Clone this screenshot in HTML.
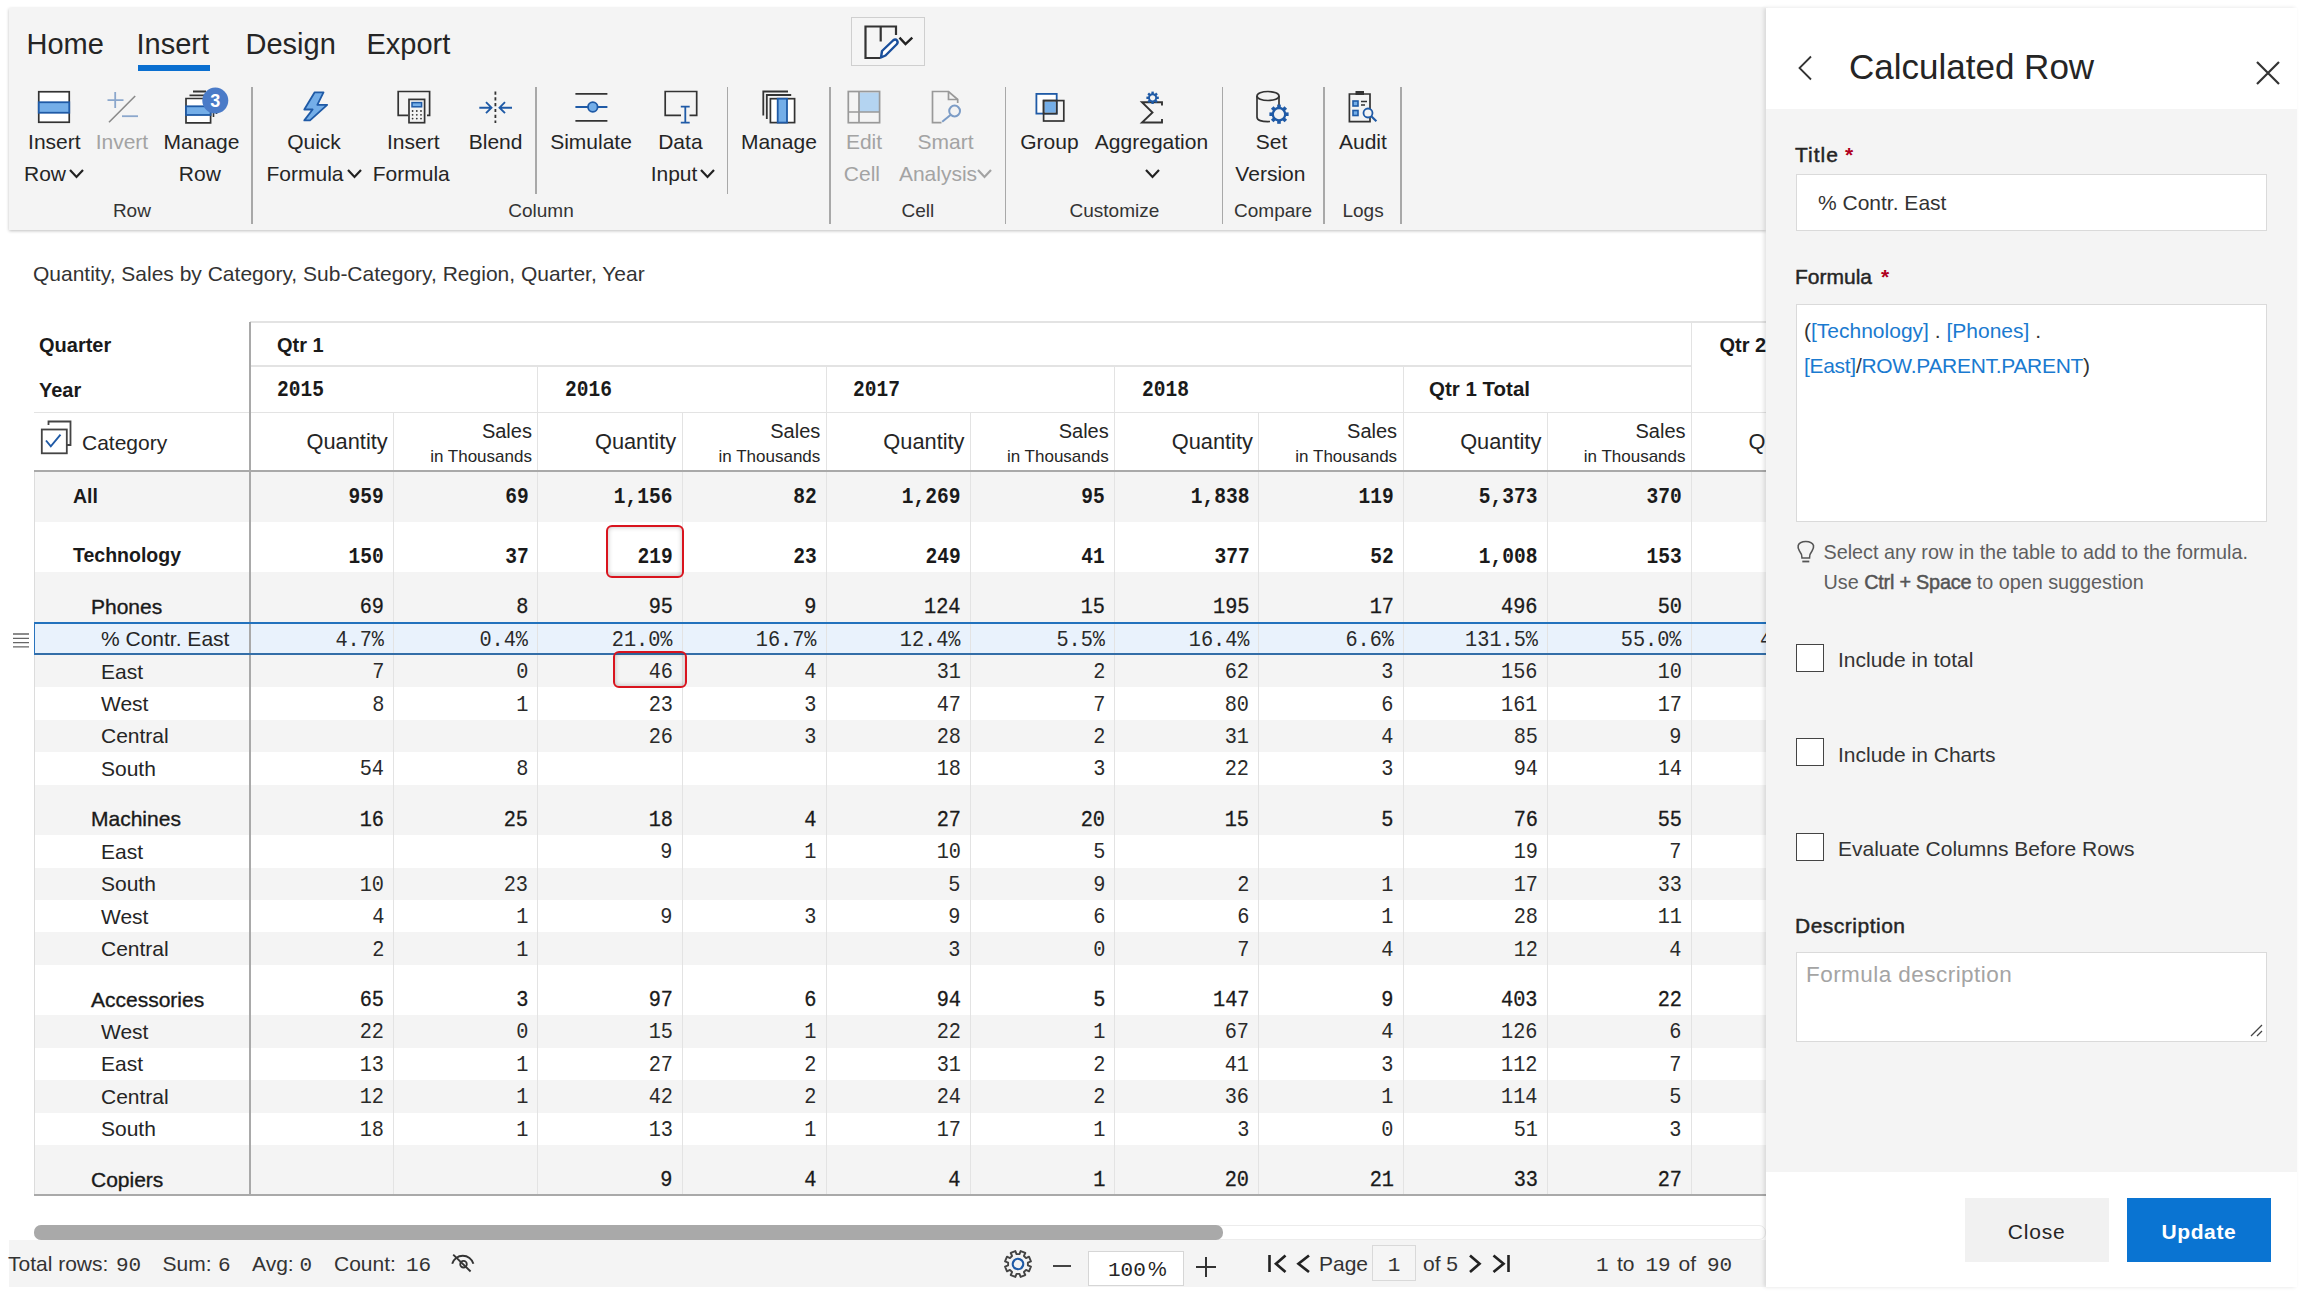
<!DOCTYPE html><html><head><meta charset="utf-8"><style>
html,body{margin:0;padding:0;background:#fff;}
body{width:2304px;height:1295px;position:relative;overflow:hidden;font-family:"Liberation Sans",sans-serif;}
.t{position:absolute;white-space:pre;}
.r{position:absolute;}
.sb{-webkit-text-stroke:0.45px currentColor;}
</style></head><body>
<div class="r" style="left:9.00px;top:8.00px;width:1757.00px;height:222.00px;background:#f4f4f4;box-shadow:0 1px 3px rgba(0,0,0,0.25);"></div>
<div class="t" style="top:29.65px;font-size:29px;line-height:29px;color:#252525;left:26.50px;">Home</div>
<div class="t" style="top:29.65px;font-size:29px;line-height:29px;color:#252525;left:136.50px;">Insert</div>
<div class="t" style="top:29.65px;font-size:29px;line-height:29px;color:#252525;left:245.50px;">Design</div>
<div class="t" style="top:29.65px;font-size:29px;line-height:29px;color:#252525;left:366.50px;">Export</div>
<div class="r" style="left:137.50px;top:65.00px;width:72.50px;height:5.50px;background:#0a6fd0;"></div>
<div class="r" style="left:850.50px;top:17.30px;width:74.30px;height:48.90px;background:#f5f5f5;box-sizing:border-box;border:1.5px solid #cfcfcf;"></div>
<svg class="r" style="left:860px;top:22px;" width="60" height="40" viewBox="0 0 60 40" fill="none"><path d="M20.5 36 H5.5 V4.5 H36 V13" stroke="#333" stroke-width="2.2"/><path d="M20.7 4.5 V19.5" stroke="#333" stroke-width="2.2"/><path d="M21 35.5 L22 29 L33 18.5 Q35.5 16.5 37 18.5 Q38.5 20.5 36.5 22.5 L25.5 33.5 Z" stroke="#1a4f9c" stroke-width="2.4" fill="#fff" stroke-linejoin="round"/><path d="M39.5 15.6 L45.5 22 L52.3 15.6" stroke="#222" stroke-width="2.4"/></svg>
<div class="r" style="left:251.25px;top:87.00px;width:1.50px;height:137.00px;background:#a8a8a8;"></div>
<div class="r" style="left:535.25px;top:87.00px;width:1.50px;height:107.00px;background:#a8a8a8;"></div>
<div class="r" style="left:726.75px;top:87.00px;width:1.50px;height:107.00px;background:#a8a8a8;"></div>
<div class="r" style="left:829.25px;top:87.00px;width:1.50px;height:137.00px;background:#a8a8a8;"></div>
<div class="r" style="left:1004.75px;top:87.00px;width:1.50px;height:137.00px;background:#a8a8a8;"></div>
<div class="r" style="left:1221.75px;top:87.00px;width:1.50px;height:137.00px;background:#a8a8a8;"></div>
<div class="r" style="left:1323.25px;top:87.00px;width:1.50px;height:137.00px;background:#a8a8a8;"></div>
<div class="r" style="left:1400.25px;top:87.00px;width:1.50px;height:137.00px;background:#a8a8a8;"></div>
<div class="t" style="top:130.82px;font-size:21px;line-height:21px;color:#252525;left:-245.70px;width:600px;text-align:center;">Insert</div>
<div class="t" style="top:162.92px;font-size:21px;line-height:21px;color:#252525;left:-255.00px;width:600px;text-align:center;">Row</div>
<svg class="r" style="left:68px;top:168px;" width="17" height="11" viewBox="0 0 17 11" fill="none"><path d="M2 2 L8.5 9 L15 2" stroke="#222" stroke-width="2.2"/></svg>
<div class="t" style="top:130.82px;font-size:21px;line-height:21px;color:#a3a3a3;left:-178.10px;width:600px;text-align:center;">Invert</div>
<div class="t" style="top:130.82px;font-size:21px;line-height:21px;color:#252525;left:-98.50px;width:600px;text-align:center;">Manage</div>
<div class="t" style="top:162.92px;font-size:21px;line-height:21px;color:#252525;left:-100.20px;width:600px;text-align:center;">Row</div>
<div class="t" style="top:201.12px;font-size:19px;line-height:19px;color:#333;left:-168.10px;width:600px;text-align:center;">Row</div>
<div class="t" style="top:130.82px;font-size:21px;line-height:21px;color:#252525;left:14.00px;width:600px;text-align:center;">Quick</div>
<div class="t" style="top:162.92px;font-size:21px;line-height:21px;color:#252525;left:5.00px;width:600px;text-align:center;">Formula</div>
<svg class="r" style="left:346px;top:168px;" width="17" height="11" viewBox="0 0 17 11" fill="none"><path d="M2 2 L8.5 9 L15 2" stroke="#222" stroke-width="2.2"/></svg>
<div class="t" style="top:130.82px;font-size:21px;line-height:21px;color:#252525;left:113.30px;width:600px;text-align:center;">Insert</div>
<div class="t" style="top:162.92px;font-size:21px;line-height:21px;color:#252525;left:111.30px;width:600px;text-align:center;">Formula</div>
<div class="t" style="top:130.82px;font-size:21px;line-height:21px;color:#252525;left:195.60px;width:600px;text-align:center;">Blend</div>
<div class="t" style="top:130.82px;font-size:21px;line-height:21px;color:#252525;left:291.00px;width:600px;text-align:center;">Simulate</div>
<div class="t" style="top:130.82px;font-size:21px;line-height:21px;color:#252525;left:380.40px;width:600px;text-align:center;">Data</div>
<div class="t" style="top:162.92px;font-size:21px;line-height:21px;color:#252525;left:374.00px;width:600px;text-align:center;">Input</div>
<svg class="r" style="left:699px;top:168px;" width="17" height="11" viewBox="0 0 17 11" fill="none"><path d="M2 2 L8.5 9 L15 2" stroke="#222" stroke-width="2.2"/></svg>
<div class="t" style="top:201.12px;font-size:19px;line-height:19px;color:#333;left:241.00px;width:600px;text-align:center;">Column</div>
<div class="t" style="top:130.82px;font-size:21px;line-height:21px;color:#252525;left:478.90px;width:600px;text-align:center;">Manage</div>
<div class="t" style="top:130.82px;font-size:21px;line-height:21px;color:#a3a3a3;left:564.00px;width:600px;text-align:center;">Edit</div>
<div class="t" style="top:162.92px;font-size:21px;line-height:21px;color:#a3a3a3;left:561.90px;width:600px;text-align:center;">Cell</div>
<div class="t" style="top:130.82px;font-size:21px;line-height:21px;color:#a3a3a3;left:645.50px;width:600px;text-align:center;">Smart</div>
<div class="t" style="top:162.92px;font-size:21px;line-height:21px;color:#a3a3a3;left:638.00px;width:600px;text-align:center;">Analysis</div>
<svg class="r" style="left:976px;top:168px;" width="17" height="11" viewBox="0 0 17 11" fill="none"><path d="M2 2 L8.5 9 L15 2" stroke="#a3a3a3" stroke-width="2.2"/></svg>
<div class="t" style="top:201.12px;font-size:19px;line-height:19px;color:#333;left:617.90px;width:600px;text-align:center;">Cell</div>
<div class="t" style="top:130.82px;font-size:21px;line-height:21px;color:#252525;left:749.40px;width:600px;text-align:center;">Group</div>
<div class="t" style="top:130.82px;font-size:21px;line-height:21px;color:#252525;left:851.50px;width:600px;text-align:center;">Aggregation</div>
<svg class="r" style="left:1144px;top:168px;" width="17" height="11" viewBox="0 0 17 11" fill="none"><path d="M2 2 L8.5 9 L15 2" stroke="#222" stroke-width="2.2"/></svg>
<div class="t" style="top:201.12px;font-size:19px;line-height:19px;color:#333;left:814.40px;width:600px;text-align:center;">Customize</div>
<div class="t" style="top:130.82px;font-size:21px;line-height:21px;color:#252525;left:971.60px;width:600px;text-align:center;">Set</div>
<div class="t" style="top:162.92px;font-size:21px;line-height:21px;color:#252525;left:970.40px;width:600px;text-align:center;">Version</div>
<div class="t" style="top:201.12px;font-size:19px;line-height:19px;color:#333;left:973.10px;width:600px;text-align:center;">Compare</div>
<div class="t" style="top:130.82px;font-size:21px;line-height:21px;color:#252525;left:1062.90px;width:600px;text-align:center;">Audit</div>
<div class="t" style="top:201.12px;font-size:19px;line-height:19px;color:#333;left:1063.10px;width:600px;text-align:center;">Logs</div>
<svg class="r" style="left:36px;top:89px;" width="36" height="36" viewBox="0 0 36 36" fill="none"><rect x="2.75" y="2.75" width="30.5" height="30.5" stroke="#333" stroke-width="1.7" fill="#fff"/><rect x="2.75" y="13.25" width="30.5" height="10.5" stroke="#1f5aa6" stroke-width="1.8" fill="#74aee8"/></svg>
<svg class="r" style="left:104px;top:88px;" width="40" height="38" viewBox="0 0 40 38" fill="none"><path d="M3.5 12.2 H19.5 M11.2 4 V20" stroke="#8ba7cc" stroke-width="1.8"/><path d="M18 28.2 H34" stroke="#8ba7cc" stroke-width="1.8"/><path d="M5 34.3 L31.2 8" stroke="#8a8a8a" stroke-width="1.6"/></svg>
<svg class="r" style="left:182px;top:86px;" width="50" height="40" viewBox="0 0 50 40" fill="none"><path d="M11 5.5 H24 M7.5 9.4 H26" stroke="#333" stroke-width="1.8"/><path d="M4 12.5 H28.6 V36.8 H4 Z" stroke="#333" stroke-width="1.7" fill="#fff"/><rect x="4" y="20.3" width="24.6" height="8.7" stroke="#1f5aa6" stroke-width="1.8" fill="#74aee8"/><path d="M31.5 31 V24 M34.5 28 V24" stroke="#333" stroke-width="1.6"/><circle cx="33.3" cy="14.6" r="13" fill="#4a7bc8"/><text x="33.3" y="21" text-anchor="middle" font-family="Liberation Sans" font-weight="700" font-size="18" fill="#fff">3</text></svg>
<svg class="r" style="left:300px;top:88px;" width="32" height="36" viewBox="0 0 32 36" fill="none"><path d="M14.7 4.3 H23.5 L17.3 16.8 H27.2 L10 32.4 H4.3 L12.6 21.5 H4.3 Z" stroke="#1f5aa6" stroke-width="1.8" fill="#74aee8" stroke-linejoin="round"/></svg>
<svg class="r" style="left:395px;top:88px;" width="38" height="38" viewBox="0 0 38 38" fill="none"><path d="M13 27.4 H3.2 V3.5 H34.6 V27.4 H32" stroke="#333" stroke-width="1.7"/><rect x="14" y="11.4" width="15.6" height="23.3" stroke="#333" stroke-width="1.7" fill="#f3f3f3"/><rect x="17" y="14.6" width="9.6" height="4.2" stroke="#1f5aa6" stroke-width="1.5" fill="#74aee8"/><circle cx="17.6" cy="23.0" r="0.9" fill="#333"/><circle cx="17.6" cy="26.8" r="0.9" fill="#333"/><circle cx="17.6" cy="30.6" r="0.9" fill="#333"/><circle cx="21.8" cy="23.0" r="0.9" fill="#333"/><circle cx="21.8" cy="26.8" r="0.9" fill="#333"/><circle cx="21.8" cy="30.6" r="0.9" fill="#333"/><circle cx="26.0" cy="23.0" r="0.9" fill="#333"/><circle cx="26.0" cy="26.8" r="0.9" fill="#333"/><circle cx="26.0" cy="30.6" r="0.9" fill="#333"/></svg>
<svg class="r" style="left:476px;top:88px;" width="40" height="38" viewBox="0 0 40 38" fill="none"><path d="M19.4 3.5 V35" stroke="#333" stroke-width="1.8" stroke-dasharray="3.2 2.6"/><path d="M3.3 19.7 H15 M10 14.2 L15.5 19.7 L10 25.2" stroke="#1f5aa6" stroke-width="1.9"/><path d="M36 19.7 H24 M29 14.2 L23.5 19.7 L29 25.2" stroke="#1f5aa6" stroke-width="1.9"/></svg>
<svg class="r" style="left:572px;top:88px;" width="38" height="38" viewBox="0 0 38 38" fill="none"><path d="M3.4 5.9 H35.4 M3.4 32.9 H35.4" stroke="#333" stroke-width="1.7"/><path d="M3.4 19 H35.4" stroke="#1f5aa6" stroke-width="1.8"/><circle cx="20.8" cy="19" r="4.8" stroke="#1f5aa6" stroke-width="1.8" fill="#74aee8"/></svg>
<svg class="r" style="left:662px;top:88px;" width="38" height="38" viewBox="0 0 38 38" fill="none"><path d="M19 27.4 H3.2 V3.5 H34.7 V27.4 H27.5" stroke="#333" stroke-width="1.7"/><path d="M23.3 18.6 V34.6 M18.8 18.6 H27.7 M18.8 34.6 H27.7" stroke="#1f5aa6" stroke-width="1.8"/></svg>
<svg class="r" style="left:760px;top:88px;" width="38" height="38" viewBox="0 0 38 38" fill="none"><path d="M3.3 27.6 V3.5 H28" stroke="#333" stroke-width="1.8"/><path d="M6.8 31 V7 H31.2" stroke="#333" stroke-width="1.8"/><rect x="10.4" y="10.7" width="24.2" height="23.9" stroke="#333" stroke-width="1.7" fill="#fff"/><rect x="17.7" y="10.7" width="9.3" height="23.9" stroke="#1f5aa6" stroke-width="1.8" fill="#74aee8"/></svg>
<svg class="r" style="left:846px;top:88px;" width="36" height="38" viewBox="0 0 36 38" fill="none"><rect x="13" y="4.5" width="20.6" height="19.5" fill="#b4d4f1"/><rect x="2.3" y="3.5" width="31.3" height="31.2" stroke="#999" stroke-width="1.7" fill="none"/><path d="M13 3.5 V34.7 M2.3 24 H33.6" stroke="#999" stroke-width="1.7"/></svg>
<svg class="r" style="left:930px;top:88px;" width="36" height="38" viewBox="0 0 36 38" fill="none"><path d="M11.5 34.7 H2.5 V3.5 H18.5 L27.7 11.5 V15" stroke="#999" stroke-width="1.7"/><path d="M18.5 3.5 V11.5 H27.7" stroke="#999" stroke-width="1.7"/><circle cx="24.6" cy="23" r="5.4" stroke="#7c9cc6" stroke-width="2" fill="#f3f3f3"/><path d="M20.8 26.8 L12.2 33.8" stroke="#7c9cc6" stroke-width="2"/></svg>
<svg class="r" style="left:1033px;top:90px;" width="34" height="34" viewBox="0 0 34 34" fill="none"><rect x="3.4" y="3.9" width="20.3" height="19.7" stroke="#1f5aa6" stroke-width="1.8" fill="#fff"/><rect x="10.6" y="10.6" width="20.2" height="20.4" stroke="#333" stroke-width="1.7" fill="none"/><rect x="11.6" y="11.6" width="11.1" height="11" fill="#74aee8"/><path d="M10.6 10.6 H23.7 V23.6 H10.6 Z" stroke="#333" stroke-width="1.7"/></svg>
<svg class="r" style="left:1136px;top:86px;" width="34" height="40" viewBox="0 0 34 40" fill="none"><path d="M26 19.5 V16.2 H6 L16.5 26.5 L6 36.5 H26 V33" stroke="#333" stroke-width="1.9" stroke-linejoin="miter"/><g transform="translate(16.6 11.8)"><rect x="-1.2" y="-6.2" width="2.4" height="3" fill="#1f5aa6" transform="rotate(0)"/><rect x="-1.2" y="-6.2" width="2.4" height="3" fill="#1f5aa6" transform="rotate(45)"/><rect x="-1.2" y="-6.2" width="2.4" height="3" fill="#1f5aa6" transform="rotate(90)"/><rect x="-1.2" y="-6.2" width="2.4" height="3" fill="#1f5aa6" transform="rotate(135)"/><rect x="-1.2" y="-6.2" width="2.4" height="3" fill="#1f5aa6" transform="rotate(180)"/><rect x="-1.2" y="-6.2" width="2.4" height="3" fill="#1f5aa6" transform="rotate(225)"/><rect x="-1.2" y="-6.2" width="2.4" height="3" fill="#1f5aa6" transform="rotate(270)"/><rect x="-1.2" y="-6.2" width="2.4" height="3" fill="#1f5aa6" transform="rotate(315)"/><circle r="3.6" stroke="#1f5aa6" stroke-width="1.9" fill="#f3f3f3"/></g></svg>
<svg class="r" style="left:1252px;top:88px;" width="42" height="38" viewBox="0 0 42 38" fill="none"><path d="M18 33.5 Q5 34 5 29 V8" stroke="#333" stroke-width="1.7"/><ellipse cx="16" cy="8" rx="11" ry="4.5" stroke="#333" stroke-width="1.7" fill="#f3f3f3"/><path d="M27 8 V17" stroke="#333" stroke-width="1.7"/><g transform="translate(27 26.2)"><rect x="-1.8" y="-9.6" width="3.6" height="4" fill="#1f5aa6" transform="rotate(0)"/><rect x="-1.8" y="-9.6" width="3.6" height="4" fill="#1f5aa6" transform="rotate(45)"/><rect x="-1.8" y="-9.6" width="3.6" height="4" fill="#1f5aa6" transform="rotate(90)"/><rect x="-1.8" y="-9.6" width="3.6" height="4" fill="#1f5aa6" transform="rotate(135)"/><rect x="-1.8" y="-9.6" width="3.6" height="4" fill="#1f5aa6" transform="rotate(180)"/><rect x="-1.8" y="-9.6" width="3.6" height="4" fill="#1f5aa6" transform="rotate(225)"/><rect x="-1.8" y="-9.6" width="3.6" height="4" fill="#1f5aa6" transform="rotate(270)"/><rect x="-1.8" y="-9.6" width="3.6" height="4" fill="#1f5aa6" transform="rotate(315)"/><circle r="6.2" stroke="#1f5aa6" stroke-width="2.3" fill="#f3f3f3"/></g></svg>
<svg class="r" style="left:1346px;top:88px;" width="36" height="38" viewBox="0 0 36 38" fill="none"><path d="M3.4 6 H24 V33.6 H3.4 Z" stroke="#333" stroke-width="1.7" fill="#f3f3f3"/><rect x="9.5" y="3" width="8.5" height="4" fill="#333"/><rect x="7" y="13" width="5" height="5" stroke="#1f5aa6" stroke-width="1.6" fill="#74aee8"/><rect x="7" y="22.5" width="5" height="5" stroke="#1f5aa6" stroke-width="1.6" fill="#74aee8"/><path d="M15 13.5 H21 M15 17 H19" stroke="#333" stroke-width="1.4"/><circle cx="22" cy="25" r="4.5" stroke="#1f5aa6" stroke-width="1.8" fill="#f3f3f3"/><path d="M25.3 28.3 L30.4 33.2" stroke="#1f5aa6" stroke-width="2.2"/></svg>
<div class="t" style="top:263.42px;font-size:21px;line-height:21px;color:#333;left:33.00px;">Quantity, Sales by Category, Sub-Category, Region, Quarter, Year</div>
<div class="r" style="left:249.50px;top:321.00px;width:1516.50px;height:1.50px;background:#e3e3e3;"></div>
<div class="r" style="left:249.50px;top:365.00px;width:1442.00px;height:1.50px;background:#e3e3e3;"></div>
<div class="r" style="left:34.00px;top:411.50px;width:1732.00px;height:1.50px;background:#e3e3e3;"></div>
<div class="t" style="top:334.77px;font-size:20px;line-height:20px;color:#1a1a1a;font-weight:700;left:39.00px;">Quarter</div>
<div class="t" style="top:380.07px;font-size:20px;line-height:20px;color:#1a1a1a;font-weight:700;left:39.00px;">Year</div>
<div class="t" style="top:334.77px;font-size:20px;line-height:20px;color:#1a1a1a;font-weight:700;left:277.00px;">Qtr 1</div>
<div class="t" style="top:334.77px;font-size:20px;line-height:20px;color:#1a1a1a;font-weight:700;left:1719.50px;">Qtr 2</div>
<div class="t" style="top:379.92px;font-size:21.5px;line-height:21.5px;color:#1a1a1a;font-weight:700;font-family:'Liberation Mono', monospace;left:276.50px;transform:scaleX(0.91);transform-origin:0 50%;">2015</div>
<div class="t" style="top:379.92px;font-size:21.5px;line-height:21.5px;color:#1a1a1a;font-weight:700;font-family:'Liberation Mono', monospace;left:564.90px;transform:scaleX(0.91);transform-origin:0 50%;">2016</div>
<div class="t" style="top:379.92px;font-size:21.5px;line-height:21.5px;color:#1a1a1a;font-weight:700;font-family:'Liberation Mono', monospace;left:853.30px;transform:scaleX(0.91);transform-origin:0 50%;">2017</div>
<div class="t" style="top:379.92px;font-size:21.5px;line-height:21.5px;color:#1a1a1a;font-weight:700;font-family:'Liberation Mono', monospace;left:1141.70px;transform:scaleX(0.91);transform-origin:0 50%;">2018</div>
<div class="t" style="top:379.05px;font-size:20.5px;line-height:20.5px;color:#1a1a1a;font-weight:700;left:1429.00px;">Qtr 1 Total</div>
<svg class="r" style="left:39px;top:418px;" width="38" height="38" viewBox="0 0 38 38" fill="none"><path d="M9.5 7 V3.5 H31.5 V27 H28" stroke="#444" stroke-width="1.8"/><rect x="2.8" y="11.5" width="25" height="23.8" stroke="#444" stroke-width="1.8" fill="#fff"/><path d="M7 22.5 L11.8 28.3 L21.5 16.7" stroke="#1f5aa6" stroke-width="1.9"/></svg>
<div class="t" style="top:431.52px;font-size:21px;line-height:21px;color:#252525;left:82.00px;">Category</div>
<div class="t" style="top:430.85px;font-size:21.8px;line-height:21.8px;color:#252525;right:1916.30px;text-align:right;">Quantity</div>
<div class="t" style="top:421.47px;font-size:20px;line-height:20px;color:#252525;right:1772.10px;text-align:right;">Sales</div>
<div class="t" style="top:448.31px;font-size:17px;line-height:17px;color:#252525;right:1772.10px;text-align:right;">in Thousands</div>
<div class="t" style="top:430.85px;font-size:21.8px;line-height:21.8px;color:#252525;right:1627.90px;text-align:right;">Quantity</div>
<div class="t" style="top:421.47px;font-size:20px;line-height:20px;color:#252525;right:1483.70px;text-align:right;">Sales</div>
<div class="t" style="top:448.31px;font-size:17px;line-height:17px;color:#252525;right:1483.70px;text-align:right;">in Thousands</div>
<div class="t" style="top:430.85px;font-size:21.8px;line-height:21.8px;color:#252525;right:1339.50px;text-align:right;">Quantity</div>
<div class="t" style="top:421.47px;font-size:20px;line-height:20px;color:#252525;right:1195.30px;text-align:right;">Sales</div>
<div class="t" style="top:448.31px;font-size:17px;line-height:17px;color:#252525;right:1195.30px;text-align:right;">in Thousands</div>
<div class="t" style="top:430.85px;font-size:21.8px;line-height:21.8px;color:#252525;right:1051.10px;text-align:right;">Quantity</div>
<div class="t" style="top:421.47px;font-size:20px;line-height:20px;color:#252525;right:906.90px;text-align:right;">Sales</div>
<div class="t" style="top:448.31px;font-size:17px;line-height:17px;color:#252525;right:906.90px;text-align:right;">in Thousands</div>
<div class="t" style="top:430.85px;font-size:21.8px;line-height:21.8px;color:#252525;right:762.70px;text-align:right;">Quantity</div>
<div class="t" style="top:421.47px;font-size:20px;line-height:20px;color:#252525;right:618.50px;text-align:right;">Sales</div>
<div class="t" style="top:448.31px;font-size:17px;line-height:17px;color:#252525;right:618.50px;text-align:right;">in Thousands</div>
<div class="t" style="top:430.85px;font-size:21.8px;line-height:21.8px;color:#252525;right:474.30px;text-align:right;">Quantity</div>
<div class="r" style="left:34.00px;top:471.00px;width:1732.00px;height:50.50px;background:#f4f4f4;"></div>
<div class="r" style="left:34.00px;top:572.00px;width:1732.00px;height:50.50px;background:#f4f4f4;"></div>
<div class="r" style="left:34.00px;top:622.50px;width:1732.00px;height:32.42px;background:#e9f2fc;"></div>
<div class="r" style="left:34.00px;top:654.92px;width:1732.00px;height:32.42px;background:#f4f4f4;"></div>
<div class="r" style="left:34.00px;top:719.76px;width:1732.00px;height:32.42px;background:#f4f4f4;"></div>
<div class="r" style="left:34.00px;top:784.60px;width:1732.00px;height:50.50px;background:#f4f4f4;"></div>
<div class="r" style="left:34.00px;top:867.52px;width:1732.00px;height:32.42px;background:#f4f4f4;"></div>
<div class="r" style="left:34.00px;top:932.36px;width:1732.00px;height:32.42px;background:#f4f4f4;"></div>
<div class="r" style="left:34.00px;top:1015.28px;width:1732.00px;height:32.42px;background:#f4f4f4;"></div>
<div class="r" style="left:34.00px;top:1080.12px;width:1732.00px;height:32.42px;background:#f4f4f4;"></div>
<div class="r" style="left:34.00px;top:1144.96px;width:1732.00px;height:50.50px;background:#f4f4f4;"></div>
<div class="r" style="left:393.10px;top:412.00px;width:1.20px;height:783.46px;background:#e3e3e3;"></div>
<div class="r" style="left:537.30px;top:412.00px;width:1.20px;height:783.46px;background:#e3e3e3;"></div>
<div class="r" style="left:681.50px;top:412.00px;width:1.20px;height:783.46px;background:#e3e3e3;"></div>
<div class="r" style="left:825.70px;top:412.00px;width:1.20px;height:783.46px;background:#e3e3e3;"></div>
<div class="r" style="left:969.90px;top:412.00px;width:1.20px;height:783.46px;background:#e3e3e3;"></div>
<div class="r" style="left:1114.10px;top:412.00px;width:1.20px;height:783.46px;background:#e3e3e3;"></div>
<div class="r" style="left:1258.30px;top:412.00px;width:1.20px;height:783.46px;background:#e3e3e3;"></div>
<div class="r" style="left:1402.50px;top:412.00px;width:1.20px;height:783.46px;background:#e3e3e3;"></div>
<div class="r" style="left:1546.70px;top:412.00px;width:1.20px;height:783.46px;background:#e3e3e3;"></div>
<div class="r" style="left:1690.90px;top:412.00px;width:1.20px;height:783.46px;background:#e3e3e3;"></div>
<div class="r" style="left:537.30px;top:366.00px;width:1.20px;height:46.00px;background:#e3e3e3;"></div>
<div class="r" style="left:825.70px;top:366.00px;width:1.20px;height:46.00px;background:#e3e3e3;"></div>
<div class="r" style="left:1114.10px;top:366.00px;width:1.20px;height:46.00px;background:#e3e3e3;"></div>
<div class="r" style="left:1402.50px;top:366.00px;width:1.20px;height:46.00px;background:#e3e3e3;"></div>
<div class="r" style="left:1690.90px;top:322.00px;width:1.20px;height:90.00px;background:#e3e3e3;"></div>
<div class="r" style="left:33.50px;top:471.00px;width:1.20px;height:724.46px;background:#dcdcdc;"></div>
<div class="r" style="left:248.60px;top:322.00px;width:2.00px;height:873.46px;background:#a9a9a9;"></div>
<div class="r" style="left:34.00px;top:469.50px;width:1732.00px;height:2.00px;background:#a9a9a9;"></div>
<div class="r" style="left:34.00px;top:1194.26px;width:1732.00px;height:2.00px;background:#a9a9a9;"></div>
<div class="r" style="left:34.00px;top:621.90px;width:1732.00px;height:2.00px;background:#2272bd;"></div>
<div class="r" style="left:34.00px;top:653.32px;width:1732.00px;height:2.00px;background:#336ea8;"></div>
<div class="r" style="left:33.50px;top:621.50px;width:1.80px;height:33.72px;background:#2a74bd;"></div>
<div class="t" style="top:487.09px;font-size:19.5px;line-height:19.5px;color:#1a1a1a;font-weight:700;left:73.00px;">All</div>
<div class="t" style="top:487.12px;font-size:21.5px;line-height:21.5px;color:#1a1a1a;font-weight:700;font-family:'Liberation Mono', monospace;right:1919.80px;text-align:right;transform:scaleX(0.91);transform-origin:100% 50%;">959</div>
<div class="t" style="top:487.12px;font-size:21.5px;line-height:21.5px;color:#1a1a1a;font-weight:700;font-family:'Liberation Mono', monospace;right:1775.60px;text-align:right;transform:scaleX(0.91);transform-origin:100% 50%;">69</div>
<div class="t" style="top:487.12px;font-size:21.5px;line-height:21.5px;color:#1a1a1a;font-weight:700;font-family:'Liberation Mono', monospace;right:1631.40px;text-align:right;transform:scaleX(0.91);transform-origin:100% 50%;">1,156</div>
<div class="t" style="top:487.12px;font-size:21.5px;line-height:21.5px;color:#1a1a1a;font-weight:700;font-family:'Liberation Mono', monospace;right:1487.20px;text-align:right;transform:scaleX(0.91);transform-origin:100% 50%;">82</div>
<div class="t" style="top:487.12px;font-size:21.5px;line-height:21.5px;color:#1a1a1a;font-weight:700;font-family:'Liberation Mono', monospace;right:1343.00px;text-align:right;transform:scaleX(0.91);transform-origin:100% 50%;">1,269</div>
<div class="t" style="top:487.12px;font-size:21.5px;line-height:21.5px;color:#1a1a1a;font-weight:700;font-family:'Liberation Mono', monospace;right:1198.80px;text-align:right;transform:scaleX(0.91);transform-origin:100% 50%;">95</div>
<div class="t" style="top:487.12px;font-size:21.5px;line-height:21.5px;color:#1a1a1a;font-weight:700;font-family:'Liberation Mono', monospace;right:1054.60px;text-align:right;transform:scaleX(0.91);transform-origin:100% 50%;">1,838</div>
<div class="t" style="top:487.12px;font-size:21.5px;line-height:21.5px;color:#1a1a1a;font-weight:700;font-family:'Liberation Mono', monospace;right:910.40px;text-align:right;transform:scaleX(0.91);transform-origin:100% 50%;">119</div>
<div class="t" style="top:487.12px;font-size:21.5px;line-height:21.5px;color:#1a1a1a;font-weight:700;font-family:'Liberation Mono', monospace;right:766.20px;text-align:right;transform:scaleX(0.91);transform-origin:100% 50%;">5,373</div>
<div class="t" style="top:487.12px;font-size:21.5px;line-height:21.5px;color:#1a1a1a;font-weight:700;font-family:'Liberation Mono', monospace;right:622.00px;text-align:right;transform:scaleX(0.91);transform-origin:100% 50%;">370</div>
<div class="t" style="top:546.49px;font-size:19.5px;line-height:19.5px;color:#1a1a1a;font-weight:700;left:73.00px;">Technology</div>
<div class="t" style="top:546.52px;font-size:21.5px;line-height:21.5px;color:#1a1a1a;font-weight:700;font-family:'Liberation Mono', monospace;right:1919.80px;text-align:right;transform:scaleX(0.91);transform-origin:100% 50%;">150</div>
<div class="t" style="top:546.52px;font-size:21.5px;line-height:21.5px;color:#1a1a1a;font-weight:700;font-family:'Liberation Mono', monospace;right:1775.60px;text-align:right;transform:scaleX(0.91);transform-origin:100% 50%;">37</div>
<div class="t" style="top:546.52px;font-size:21.5px;line-height:21.5px;color:#1a1a1a;font-weight:700;font-family:'Liberation Mono', monospace;right:1631.40px;text-align:right;transform:scaleX(0.91);transform-origin:100% 50%;">219</div>
<div class="t" style="top:546.52px;font-size:21.5px;line-height:21.5px;color:#1a1a1a;font-weight:700;font-family:'Liberation Mono', monospace;right:1487.20px;text-align:right;transform:scaleX(0.91);transform-origin:100% 50%;">23</div>
<div class="t" style="top:546.52px;font-size:21.5px;line-height:21.5px;color:#1a1a1a;font-weight:700;font-family:'Liberation Mono', monospace;right:1343.00px;text-align:right;transform:scaleX(0.91);transform-origin:100% 50%;">249</div>
<div class="t" style="top:546.52px;font-size:21.5px;line-height:21.5px;color:#1a1a1a;font-weight:700;font-family:'Liberation Mono', monospace;right:1198.80px;text-align:right;transform:scaleX(0.91);transform-origin:100% 50%;">41</div>
<div class="t" style="top:546.52px;font-size:21.5px;line-height:21.5px;color:#1a1a1a;font-weight:700;font-family:'Liberation Mono', monospace;right:1054.60px;text-align:right;transform:scaleX(0.91);transform-origin:100% 50%;">377</div>
<div class="t" style="top:546.52px;font-size:21.5px;line-height:21.5px;color:#1a1a1a;font-weight:700;font-family:'Liberation Mono', monospace;right:910.40px;text-align:right;transform:scaleX(0.91);transform-origin:100% 50%;">52</div>
<div class="t" style="top:546.52px;font-size:21.5px;line-height:21.5px;color:#1a1a1a;font-weight:700;font-family:'Liberation Mono', monospace;right:766.20px;text-align:right;transform:scaleX(0.91);transform-origin:100% 50%;">1,008</div>
<div class="t" style="top:546.52px;font-size:21.5px;line-height:21.5px;color:#1a1a1a;font-weight:700;font-family:'Liberation Mono', monospace;right:622.00px;text-align:right;transform:scaleX(0.91);transform-origin:100% 50%;">153</div>
<div class="t" style="top:595.72px;font-size:21px;line-height:21px;color:#1a1a1a;left:91.00px;-webkit-text-stroke:0.35px #1a1a1a;">Phones</div>
<div class="t" style="top:596.25px;font-size:22.5px;line-height:22.5px;color:#1a1a1a;font-family:'Liberation Mono', monospace;right:1919.80px;text-align:right;-webkit-text-stroke:0.3px #1a1a1a;transform:scaleX(0.9);transform-origin:100% 50%;">69</div>
<div class="t" style="top:596.25px;font-size:22.5px;line-height:22.5px;color:#1a1a1a;font-family:'Liberation Mono', monospace;right:1775.60px;text-align:right;-webkit-text-stroke:0.3px #1a1a1a;transform:scaleX(0.9);transform-origin:100% 50%;">8</div>
<div class="t" style="top:596.25px;font-size:22.5px;line-height:22.5px;color:#1a1a1a;font-family:'Liberation Mono', monospace;right:1631.40px;text-align:right;-webkit-text-stroke:0.3px #1a1a1a;transform:scaleX(0.9);transform-origin:100% 50%;">95</div>
<div class="t" style="top:596.25px;font-size:22.5px;line-height:22.5px;color:#1a1a1a;font-family:'Liberation Mono', monospace;right:1487.20px;text-align:right;-webkit-text-stroke:0.3px #1a1a1a;transform:scaleX(0.9);transform-origin:100% 50%;">9</div>
<div class="t" style="top:596.25px;font-size:22.5px;line-height:22.5px;color:#1a1a1a;font-family:'Liberation Mono', monospace;right:1343.00px;text-align:right;-webkit-text-stroke:0.3px #1a1a1a;transform:scaleX(0.9);transform-origin:100% 50%;">124</div>
<div class="t" style="top:596.25px;font-size:22.5px;line-height:22.5px;color:#1a1a1a;font-family:'Liberation Mono', monospace;right:1198.80px;text-align:right;-webkit-text-stroke:0.3px #1a1a1a;transform:scaleX(0.9);transform-origin:100% 50%;">15</div>
<div class="t" style="top:596.25px;font-size:22.5px;line-height:22.5px;color:#1a1a1a;font-family:'Liberation Mono', monospace;right:1054.60px;text-align:right;-webkit-text-stroke:0.3px #1a1a1a;transform:scaleX(0.9);transform-origin:100% 50%;">195</div>
<div class="t" style="top:596.25px;font-size:22.5px;line-height:22.5px;color:#1a1a1a;font-family:'Liberation Mono', monospace;right:910.40px;text-align:right;-webkit-text-stroke:0.3px #1a1a1a;transform:scaleX(0.9);transform-origin:100% 50%;">17</div>
<div class="t" style="top:596.25px;font-size:22.5px;line-height:22.5px;color:#1a1a1a;font-family:'Liberation Mono', monospace;right:766.20px;text-align:right;-webkit-text-stroke:0.3px #1a1a1a;transform:scaleX(0.9);transform-origin:100% 50%;">496</div>
<div class="t" style="top:596.25px;font-size:22.5px;line-height:22.5px;color:#1a1a1a;font-family:'Liberation Mono', monospace;right:622.00px;text-align:right;-webkit-text-stroke:0.3px #1a1a1a;transform:scaleX(0.9);transform-origin:100% 50%;">50</div>
<div class="t" style="top:628.14px;font-size:21px;line-height:21px;color:#252525;left:101.00px;">% Contr. East</div>
<div class="t" style="top:628.67px;font-size:22.5px;line-height:22.5px;color:#2a2a2a;font-family:'Liberation Mono', monospace;right:1919.80px;text-align:right;transform:scaleX(0.9);transform-origin:100% 50%;">4.7%</div>
<div class="t" style="top:628.67px;font-size:22.5px;line-height:22.5px;color:#2a2a2a;font-family:'Liberation Mono', monospace;right:1775.60px;text-align:right;transform:scaleX(0.9);transform-origin:100% 50%;">0.4%</div>
<div class="t" style="top:628.67px;font-size:22.5px;line-height:22.5px;color:#2a2a2a;font-family:'Liberation Mono', monospace;right:1631.40px;text-align:right;transform:scaleX(0.9);transform-origin:100% 50%;">21.0%</div>
<div class="t" style="top:628.67px;font-size:22.5px;line-height:22.5px;color:#2a2a2a;font-family:'Liberation Mono', monospace;right:1487.20px;text-align:right;transform:scaleX(0.9);transform-origin:100% 50%;">16.7%</div>
<div class="t" style="top:628.67px;font-size:22.5px;line-height:22.5px;color:#2a2a2a;font-family:'Liberation Mono', monospace;right:1343.00px;text-align:right;transform:scaleX(0.9);transform-origin:100% 50%;">12.4%</div>
<div class="t" style="top:628.67px;font-size:22.5px;line-height:22.5px;color:#2a2a2a;font-family:'Liberation Mono', monospace;right:1198.80px;text-align:right;transform:scaleX(0.9);transform-origin:100% 50%;">5.5%</div>
<div class="t" style="top:628.67px;font-size:22.5px;line-height:22.5px;color:#2a2a2a;font-family:'Liberation Mono', monospace;right:1054.60px;text-align:right;transform:scaleX(0.9);transform-origin:100% 50%;">16.4%</div>
<div class="t" style="top:628.67px;font-size:22.5px;line-height:22.5px;color:#2a2a2a;font-family:'Liberation Mono', monospace;right:910.40px;text-align:right;transform:scaleX(0.9);transform-origin:100% 50%;">6.6%</div>
<div class="t" style="top:628.67px;font-size:22.5px;line-height:22.5px;color:#2a2a2a;font-family:'Liberation Mono', monospace;right:766.20px;text-align:right;transform:scaleX(0.9);transform-origin:100% 50%;">131.5%</div>
<div class="t" style="top:628.67px;font-size:22.5px;line-height:22.5px;color:#2a2a2a;font-family:'Liberation Mono', monospace;right:622.00px;text-align:right;transform:scaleX(0.9);transform-origin:100% 50%;">55.0%</div>
<div class="t" style="top:660.56px;font-size:21px;line-height:21px;color:#252525;left:101.00px;">East</div>
<div class="t" style="top:661.09px;font-size:22.5px;line-height:22.5px;color:#2a2a2a;font-family:'Liberation Mono', monospace;right:1919.80px;text-align:right;transform:scaleX(0.9);transform-origin:100% 50%;">7</div>
<div class="t" style="top:661.09px;font-size:22.5px;line-height:22.5px;color:#2a2a2a;font-family:'Liberation Mono', monospace;right:1775.60px;text-align:right;transform:scaleX(0.9);transform-origin:100% 50%;">0</div>
<div class="t" style="top:661.09px;font-size:22.5px;line-height:22.5px;color:#2a2a2a;font-family:'Liberation Mono', monospace;right:1631.40px;text-align:right;transform:scaleX(0.9);transform-origin:100% 50%;">46</div>
<div class="t" style="top:661.09px;font-size:22.5px;line-height:22.5px;color:#2a2a2a;font-family:'Liberation Mono', monospace;right:1487.20px;text-align:right;transform:scaleX(0.9);transform-origin:100% 50%;">4</div>
<div class="t" style="top:661.09px;font-size:22.5px;line-height:22.5px;color:#2a2a2a;font-family:'Liberation Mono', monospace;right:1343.00px;text-align:right;transform:scaleX(0.9);transform-origin:100% 50%;">31</div>
<div class="t" style="top:661.09px;font-size:22.5px;line-height:22.5px;color:#2a2a2a;font-family:'Liberation Mono', monospace;right:1198.80px;text-align:right;transform:scaleX(0.9);transform-origin:100% 50%;">2</div>
<div class="t" style="top:661.09px;font-size:22.5px;line-height:22.5px;color:#2a2a2a;font-family:'Liberation Mono', monospace;right:1054.60px;text-align:right;transform:scaleX(0.9);transform-origin:100% 50%;">62</div>
<div class="t" style="top:661.09px;font-size:22.5px;line-height:22.5px;color:#2a2a2a;font-family:'Liberation Mono', monospace;right:910.40px;text-align:right;transform:scaleX(0.9);transform-origin:100% 50%;">3</div>
<div class="t" style="top:661.09px;font-size:22.5px;line-height:22.5px;color:#2a2a2a;font-family:'Liberation Mono', monospace;right:766.20px;text-align:right;transform:scaleX(0.9);transform-origin:100% 50%;">156</div>
<div class="t" style="top:661.09px;font-size:22.5px;line-height:22.5px;color:#2a2a2a;font-family:'Liberation Mono', monospace;right:622.00px;text-align:right;transform:scaleX(0.9);transform-origin:100% 50%;">10</div>
<div class="t" style="top:692.98px;font-size:21px;line-height:21px;color:#252525;left:101.00px;">West</div>
<div class="t" style="top:693.51px;font-size:22.5px;line-height:22.5px;color:#2a2a2a;font-family:'Liberation Mono', monospace;right:1919.80px;text-align:right;transform:scaleX(0.9);transform-origin:100% 50%;">8</div>
<div class="t" style="top:693.51px;font-size:22.5px;line-height:22.5px;color:#2a2a2a;font-family:'Liberation Mono', monospace;right:1775.60px;text-align:right;transform:scaleX(0.9);transform-origin:100% 50%;">1</div>
<div class="t" style="top:693.51px;font-size:22.5px;line-height:22.5px;color:#2a2a2a;font-family:'Liberation Mono', monospace;right:1631.40px;text-align:right;transform:scaleX(0.9);transform-origin:100% 50%;">23</div>
<div class="t" style="top:693.51px;font-size:22.5px;line-height:22.5px;color:#2a2a2a;font-family:'Liberation Mono', monospace;right:1487.20px;text-align:right;transform:scaleX(0.9);transform-origin:100% 50%;">3</div>
<div class="t" style="top:693.51px;font-size:22.5px;line-height:22.5px;color:#2a2a2a;font-family:'Liberation Mono', monospace;right:1343.00px;text-align:right;transform:scaleX(0.9);transform-origin:100% 50%;">47</div>
<div class="t" style="top:693.51px;font-size:22.5px;line-height:22.5px;color:#2a2a2a;font-family:'Liberation Mono', monospace;right:1198.80px;text-align:right;transform:scaleX(0.9);transform-origin:100% 50%;">7</div>
<div class="t" style="top:693.51px;font-size:22.5px;line-height:22.5px;color:#2a2a2a;font-family:'Liberation Mono', monospace;right:1054.60px;text-align:right;transform:scaleX(0.9);transform-origin:100% 50%;">80</div>
<div class="t" style="top:693.51px;font-size:22.5px;line-height:22.5px;color:#2a2a2a;font-family:'Liberation Mono', monospace;right:910.40px;text-align:right;transform:scaleX(0.9);transform-origin:100% 50%;">6</div>
<div class="t" style="top:693.51px;font-size:22.5px;line-height:22.5px;color:#2a2a2a;font-family:'Liberation Mono', monospace;right:766.20px;text-align:right;transform:scaleX(0.9);transform-origin:100% 50%;">161</div>
<div class="t" style="top:693.51px;font-size:22.5px;line-height:22.5px;color:#2a2a2a;font-family:'Liberation Mono', monospace;right:622.00px;text-align:right;transform:scaleX(0.9);transform-origin:100% 50%;">17</div>
<div class="t" style="top:725.40px;font-size:21px;line-height:21px;color:#252525;left:101.00px;">Central</div>
<div class="t" style="top:725.93px;font-size:22.5px;line-height:22.5px;color:#2a2a2a;font-family:'Liberation Mono', monospace;right:1631.40px;text-align:right;transform:scaleX(0.9);transform-origin:100% 50%;">26</div>
<div class="t" style="top:725.93px;font-size:22.5px;line-height:22.5px;color:#2a2a2a;font-family:'Liberation Mono', monospace;right:1487.20px;text-align:right;transform:scaleX(0.9);transform-origin:100% 50%;">3</div>
<div class="t" style="top:725.93px;font-size:22.5px;line-height:22.5px;color:#2a2a2a;font-family:'Liberation Mono', monospace;right:1343.00px;text-align:right;transform:scaleX(0.9);transform-origin:100% 50%;">28</div>
<div class="t" style="top:725.93px;font-size:22.5px;line-height:22.5px;color:#2a2a2a;font-family:'Liberation Mono', monospace;right:1198.80px;text-align:right;transform:scaleX(0.9);transform-origin:100% 50%;">2</div>
<div class="t" style="top:725.93px;font-size:22.5px;line-height:22.5px;color:#2a2a2a;font-family:'Liberation Mono', monospace;right:1054.60px;text-align:right;transform:scaleX(0.9);transform-origin:100% 50%;">31</div>
<div class="t" style="top:725.93px;font-size:22.5px;line-height:22.5px;color:#2a2a2a;font-family:'Liberation Mono', monospace;right:910.40px;text-align:right;transform:scaleX(0.9);transform-origin:100% 50%;">4</div>
<div class="t" style="top:725.93px;font-size:22.5px;line-height:22.5px;color:#2a2a2a;font-family:'Liberation Mono', monospace;right:766.20px;text-align:right;transform:scaleX(0.9);transform-origin:100% 50%;">85</div>
<div class="t" style="top:725.93px;font-size:22.5px;line-height:22.5px;color:#2a2a2a;font-family:'Liberation Mono', monospace;right:622.00px;text-align:right;transform:scaleX(0.9);transform-origin:100% 50%;">9</div>
<div class="t" style="top:757.82px;font-size:21px;line-height:21px;color:#252525;left:101.00px;">South</div>
<div class="t" style="top:758.35px;font-size:22.5px;line-height:22.5px;color:#2a2a2a;font-family:'Liberation Mono', monospace;right:1919.80px;text-align:right;transform:scaleX(0.9);transform-origin:100% 50%;">54</div>
<div class="t" style="top:758.35px;font-size:22.5px;line-height:22.5px;color:#2a2a2a;font-family:'Liberation Mono', monospace;right:1775.60px;text-align:right;transform:scaleX(0.9);transform-origin:100% 50%;">8</div>
<div class="t" style="top:758.35px;font-size:22.5px;line-height:22.5px;color:#2a2a2a;font-family:'Liberation Mono', monospace;right:1343.00px;text-align:right;transform:scaleX(0.9);transform-origin:100% 50%;">18</div>
<div class="t" style="top:758.35px;font-size:22.5px;line-height:22.5px;color:#2a2a2a;font-family:'Liberation Mono', monospace;right:1198.80px;text-align:right;transform:scaleX(0.9);transform-origin:100% 50%;">3</div>
<div class="t" style="top:758.35px;font-size:22.5px;line-height:22.5px;color:#2a2a2a;font-family:'Liberation Mono', monospace;right:1054.60px;text-align:right;transform:scaleX(0.9);transform-origin:100% 50%;">22</div>
<div class="t" style="top:758.35px;font-size:22.5px;line-height:22.5px;color:#2a2a2a;font-family:'Liberation Mono', monospace;right:910.40px;text-align:right;transform:scaleX(0.9);transform-origin:100% 50%;">3</div>
<div class="t" style="top:758.35px;font-size:22.5px;line-height:22.5px;color:#2a2a2a;font-family:'Liberation Mono', monospace;right:766.20px;text-align:right;transform:scaleX(0.9);transform-origin:100% 50%;">94</div>
<div class="t" style="top:758.35px;font-size:22.5px;line-height:22.5px;color:#2a2a2a;font-family:'Liberation Mono', monospace;right:622.00px;text-align:right;transform:scaleX(0.9);transform-origin:100% 50%;">14</div>
<div class="t" style="top:808.32px;font-size:21px;line-height:21px;color:#1a1a1a;left:91.00px;-webkit-text-stroke:0.35px #1a1a1a;">Machines</div>
<div class="t" style="top:808.85px;font-size:22.5px;line-height:22.5px;color:#1a1a1a;font-family:'Liberation Mono', monospace;right:1919.80px;text-align:right;-webkit-text-stroke:0.3px #1a1a1a;transform:scaleX(0.9);transform-origin:100% 50%;">16</div>
<div class="t" style="top:808.85px;font-size:22.5px;line-height:22.5px;color:#1a1a1a;font-family:'Liberation Mono', monospace;right:1775.60px;text-align:right;-webkit-text-stroke:0.3px #1a1a1a;transform:scaleX(0.9);transform-origin:100% 50%;">25</div>
<div class="t" style="top:808.85px;font-size:22.5px;line-height:22.5px;color:#1a1a1a;font-family:'Liberation Mono', monospace;right:1631.40px;text-align:right;-webkit-text-stroke:0.3px #1a1a1a;transform:scaleX(0.9);transform-origin:100% 50%;">18</div>
<div class="t" style="top:808.85px;font-size:22.5px;line-height:22.5px;color:#1a1a1a;font-family:'Liberation Mono', monospace;right:1487.20px;text-align:right;-webkit-text-stroke:0.3px #1a1a1a;transform:scaleX(0.9);transform-origin:100% 50%;">4</div>
<div class="t" style="top:808.85px;font-size:22.5px;line-height:22.5px;color:#1a1a1a;font-family:'Liberation Mono', monospace;right:1343.00px;text-align:right;-webkit-text-stroke:0.3px #1a1a1a;transform:scaleX(0.9);transform-origin:100% 50%;">27</div>
<div class="t" style="top:808.85px;font-size:22.5px;line-height:22.5px;color:#1a1a1a;font-family:'Liberation Mono', monospace;right:1198.80px;text-align:right;-webkit-text-stroke:0.3px #1a1a1a;transform:scaleX(0.9);transform-origin:100% 50%;">20</div>
<div class="t" style="top:808.85px;font-size:22.5px;line-height:22.5px;color:#1a1a1a;font-family:'Liberation Mono', monospace;right:1054.60px;text-align:right;-webkit-text-stroke:0.3px #1a1a1a;transform:scaleX(0.9);transform-origin:100% 50%;">15</div>
<div class="t" style="top:808.85px;font-size:22.5px;line-height:22.5px;color:#1a1a1a;font-family:'Liberation Mono', monospace;right:910.40px;text-align:right;-webkit-text-stroke:0.3px #1a1a1a;transform:scaleX(0.9);transform-origin:100% 50%;">5</div>
<div class="t" style="top:808.85px;font-size:22.5px;line-height:22.5px;color:#1a1a1a;font-family:'Liberation Mono', monospace;right:766.20px;text-align:right;-webkit-text-stroke:0.3px #1a1a1a;transform:scaleX(0.9);transform-origin:100% 50%;">76</div>
<div class="t" style="top:808.85px;font-size:22.5px;line-height:22.5px;color:#1a1a1a;font-family:'Liberation Mono', monospace;right:622.00px;text-align:right;-webkit-text-stroke:0.3px #1a1a1a;transform:scaleX(0.9);transform-origin:100% 50%;">55</div>
<div class="t" style="top:840.74px;font-size:21px;line-height:21px;color:#252525;left:101.00px;">East</div>
<div class="t" style="top:841.27px;font-size:22.5px;line-height:22.5px;color:#2a2a2a;font-family:'Liberation Mono', monospace;right:1631.40px;text-align:right;transform:scaleX(0.9);transform-origin:100% 50%;">9</div>
<div class="t" style="top:841.27px;font-size:22.5px;line-height:22.5px;color:#2a2a2a;font-family:'Liberation Mono', monospace;right:1487.20px;text-align:right;transform:scaleX(0.9);transform-origin:100% 50%;">1</div>
<div class="t" style="top:841.27px;font-size:22.5px;line-height:22.5px;color:#2a2a2a;font-family:'Liberation Mono', monospace;right:1343.00px;text-align:right;transform:scaleX(0.9);transform-origin:100% 50%;">10</div>
<div class="t" style="top:841.27px;font-size:22.5px;line-height:22.5px;color:#2a2a2a;font-family:'Liberation Mono', monospace;right:1198.80px;text-align:right;transform:scaleX(0.9);transform-origin:100% 50%;">5</div>
<div class="t" style="top:841.27px;font-size:22.5px;line-height:22.5px;color:#2a2a2a;font-family:'Liberation Mono', monospace;right:766.20px;text-align:right;transform:scaleX(0.9);transform-origin:100% 50%;">19</div>
<div class="t" style="top:841.27px;font-size:22.5px;line-height:22.5px;color:#2a2a2a;font-family:'Liberation Mono', monospace;right:622.00px;text-align:right;transform:scaleX(0.9);transform-origin:100% 50%;">7</div>
<div class="t" style="top:873.16px;font-size:21px;line-height:21px;color:#252525;left:101.00px;">South</div>
<div class="t" style="top:873.69px;font-size:22.5px;line-height:22.5px;color:#2a2a2a;font-family:'Liberation Mono', monospace;right:1919.80px;text-align:right;transform:scaleX(0.9);transform-origin:100% 50%;">10</div>
<div class="t" style="top:873.69px;font-size:22.5px;line-height:22.5px;color:#2a2a2a;font-family:'Liberation Mono', monospace;right:1775.60px;text-align:right;transform:scaleX(0.9);transform-origin:100% 50%;">23</div>
<div class="t" style="top:873.69px;font-size:22.5px;line-height:22.5px;color:#2a2a2a;font-family:'Liberation Mono', monospace;right:1343.00px;text-align:right;transform:scaleX(0.9);transform-origin:100% 50%;">5</div>
<div class="t" style="top:873.69px;font-size:22.5px;line-height:22.5px;color:#2a2a2a;font-family:'Liberation Mono', monospace;right:1198.80px;text-align:right;transform:scaleX(0.9);transform-origin:100% 50%;">9</div>
<div class="t" style="top:873.69px;font-size:22.5px;line-height:22.5px;color:#2a2a2a;font-family:'Liberation Mono', monospace;right:1054.60px;text-align:right;transform:scaleX(0.9);transform-origin:100% 50%;">2</div>
<div class="t" style="top:873.69px;font-size:22.5px;line-height:22.5px;color:#2a2a2a;font-family:'Liberation Mono', monospace;right:910.40px;text-align:right;transform:scaleX(0.9);transform-origin:100% 50%;">1</div>
<div class="t" style="top:873.69px;font-size:22.5px;line-height:22.5px;color:#2a2a2a;font-family:'Liberation Mono', monospace;right:766.20px;text-align:right;transform:scaleX(0.9);transform-origin:100% 50%;">17</div>
<div class="t" style="top:873.69px;font-size:22.5px;line-height:22.5px;color:#2a2a2a;font-family:'Liberation Mono', monospace;right:622.00px;text-align:right;transform:scaleX(0.9);transform-origin:100% 50%;">33</div>
<div class="t" style="top:905.58px;font-size:21px;line-height:21px;color:#252525;left:101.00px;">West</div>
<div class="t" style="top:906.11px;font-size:22.5px;line-height:22.5px;color:#2a2a2a;font-family:'Liberation Mono', monospace;right:1919.80px;text-align:right;transform:scaleX(0.9);transform-origin:100% 50%;">4</div>
<div class="t" style="top:906.11px;font-size:22.5px;line-height:22.5px;color:#2a2a2a;font-family:'Liberation Mono', monospace;right:1775.60px;text-align:right;transform:scaleX(0.9);transform-origin:100% 50%;">1</div>
<div class="t" style="top:906.11px;font-size:22.5px;line-height:22.5px;color:#2a2a2a;font-family:'Liberation Mono', monospace;right:1631.40px;text-align:right;transform:scaleX(0.9);transform-origin:100% 50%;">9</div>
<div class="t" style="top:906.11px;font-size:22.5px;line-height:22.5px;color:#2a2a2a;font-family:'Liberation Mono', monospace;right:1487.20px;text-align:right;transform:scaleX(0.9);transform-origin:100% 50%;">3</div>
<div class="t" style="top:906.11px;font-size:22.5px;line-height:22.5px;color:#2a2a2a;font-family:'Liberation Mono', monospace;right:1343.00px;text-align:right;transform:scaleX(0.9);transform-origin:100% 50%;">9</div>
<div class="t" style="top:906.11px;font-size:22.5px;line-height:22.5px;color:#2a2a2a;font-family:'Liberation Mono', monospace;right:1198.80px;text-align:right;transform:scaleX(0.9);transform-origin:100% 50%;">6</div>
<div class="t" style="top:906.11px;font-size:22.5px;line-height:22.5px;color:#2a2a2a;font-family:'Liberation Mono', monospace;right:1054.60px;text-align:right;transform:scaleX(0.9);transform-origin:100% 50%;">6</div>
<div class="t" style="top:906.11px;font-size:22.5px;line-height:22.5px;color:#2a2a2a;font-family:'Liberation Mono', monospace;right:910.40px;text-align:right;transform:scaleX(0.9);transform-origin:100% 50%;">1</div>
<div class="t" style="top:906.11px;font-size:22.5px;line-height:22.5px;color:#2a2a2a;font-family:'Liberation Mono', monospace;right:766.20px;text-align:right;transform:scaleX(0.9);transform-origin:100% 50%;">28</div>
<div class="t" style="top:906.11px;font-size:22.5px;line-height:22.5px;color:#2a2a2a;font-family:'Liberation Mono', monospace;right:622.00px;text-align:right;transform:scaleX(0.9);transform-origin:100% 50%;">11</div>
<div class="t" style="top:938.00px;font-size:21px;line-height:21px;color:#252525;left:101.00px;">Central</div>
<div class="t" style="top:938.53px;font-size:22.5px;line-height:22.5px;color:#2a2a2a;font-family:'Liberation Mono', monospace;right:1919.80px;text-align:right;transform:scaleX(0.9);transform-origin:100% 50%;">2</div>
<div class="t" style="top:938.53px;font-size:22.5px;line-height:22.5px;color:#2a2a2a;font-family:'Liberation Mono', monospace;right:1775.60px;text-align:right;transform:scaleX(0.9);transform-origin:100% 50%;">1</div>
<div class="t" style="top:938.53px;font-size:22.5px;line-height:22.5px;color:#2a2a2a;font-family:'Liberation Mono', monospace;right:1343.00px;text-align:right;transform:scaleX(0.9);transform-origin:100% 50%;">3</div>
<div class="t" style="top:938.53px;font-size:22.5px;line-height:22.5px;color:#2a2a2a;font-family:'Liberation Mono', monospace;right:1198.80px;text-align:right;transform:scaleX(0.9);transform-origin:100% 50%;">0</div>
<div class="t" style="top:938.53px;font-size:22.5px;line-height:22.5px;color:#2a2a2a;font-family:'Liberation Mono', monospace;right:1054.60px;text-align:right;transform:scaleX(0.9);transform-origin:100% 50%;">7</div>
<div class="t" style="top:938.53px;font-size:22.5px;line-height:22.5px;color:#2a2a2a;font-family:'Liberation Mono', monospace;right:910.40px;text-align:right;transform:scaleX(0.9);transform-origin:100% 50%;">4</div>
<div class="t" style="top:938.53px;font-size:22.5px;line-height:22.5px;color:#2a2a2a;font-family:'Liberation Mono', monospace;right:766.20px;text-align:right;transform:scaleX(0.9);transform-origin:100% 50%;">12</div>
<div class="t" style="top:938.53px;font-size:22.5px;line-height:22.5px;color:#2a2a2a;font-family:'Liberation Mono', monospace;right:622.00px;text-align:right;transform:scaleX(0.9);transform-origin:100% 50%;">4</div>
<div class="t" style="top:988.50px;font-size:21px;line-height:21px;color:#1a1a1a;left:91.00px;-webkit-text-stroke:0.35px #1a1a1a;">Accessories</div>
<div class="t" style="top:989.03px;font-size:22.5px;line-height:22.5px;color:#1a1a1a;font-family:'Liberation Mono', monospace;right:1919.80px;text-align:right;-webkit-text-stroke:0.3px #1a1a1a;transform:scaleX(0.9);transform-origin:100% 50%;">65</div>
<div class="t" style="top:989.03px;font-size:22.5px;line-height:22.5px;color:#1a1a1a;font-family:'Liberation Mono', monospace;right:1775.60px;text-align:right;-webkit-text-stroke:0.3px #1a1a1a;transform:scaleX(0.9);transform-origin:100% 50%;">3</div>
<div class="t" style="top:989.03px;font-size:22.5px;line-height:22.5px;color:#1a1a1a;font-family:'Liberation Mono', monospace;right:1631.40px;text-align:right;-webkit-text-stroke:0.3px #1a1a1a;transform:scaleX(0.9);transform-origin:100% 50%;">97</div>
<div class="t" style="top:989.03px;font-size:22.5px;line-height:22.5px;color:#1a1a1a;font-family:'Liberation Mono', monospace;right:1487.20px;text-align:right;-webkit-text-stroke:0.3px #1a1a1a;transform:scaleX(0.9);transform-origin:100% 50%;">6</div>
<div class="t" style="top:989.03px;font-size:22.5px;line-height:22.5px;color:#1a1a1a;font-family:'Liberation Mono', monospace;right:1343.00px;text-align:right;-webkit-text-stroke:0.3px #1a1a1a;transform:scaleX(0.9);transform-origin:100% 50%;">94</div>
<div class="t" style="top:989.03px;font-size:22.5px;line-height:22.5px;color:#1a1a1a;font-family:'Liberation Mono', monospace;right:1198.80px;text-align:right;-webkit-text-stroke:0.3px #1a1a1a;transform:scaleX(0.9);transform-origin:100% 50%;">5</div>
<div class="t" style="top:989.03px;font-size:22.5px;line-height:22.5px;color:#1a1a1a;font-family:'Liberation Mono', monospace;right:1054.60px;text-align:right;-webkit-text-stroke:0.3px #1a1a1a;transform:scaleX(0.9);transform-origin:100% 50%;">147</div>
<div class="t" style="top:989.03px;font-size:22.5px;line-height:22.5px;color:#1a1a1a;font-family:'Liberation Mono', monospace;right:910.40px;text-align:right;-webkit-text-stroke:0.3px #1a1a1a;transform:scaleX(0.9);transform-origin:100% 50%;">9</div>
<div class="t" style="top:989.03px;font-size:22.5px;line-height:22.5px;color:#1a1a1a;font-family:'Liberation Mono', monospace;right:766.20px;text-align:right;-webkit-text-stroke:0.3px #1a1a1a;transform:scaleX(0.9);transform-origin:100% 50%;">403</div>
<div class="t" style="top:989.03px;font-size:22.5px;line-height:22.5px;color:#1a1a1a;font-family:'Liberation Mono', monospace;right:622.00px;text-align:right;-webkit-text-stroke:0.3px #1a1a1a;transform:scaleX(0.9);transform-origin:100% 50%;">22</div>
<div class="t" style="top:1020.92px;font-size:21px;line-height:21px;color:#252525;left:101.00px;">West</div>
<div class="t" style="top:1021.45px;font-size:22.5px;line-height:22.5px;color:#2a2a2a;font-family:'Liberation Mono', monospace;right:1919.80px;text-align:right;transform:scaleX(0.9);transform-origin:100% 50%;">22</div>
<div class="t" style="top:1021.45px;font-size:22.5px;line-height:22.5px;color:#2a2a2a;font-family:'Liberation Mono', monospace;right:1775.60px;text-align:right;transform:scaleX(0.9);transform-origin:100% 50%;">0</div>
<div class="t" style="top:1021.45px;font-size:22.5px;line-height:22.5px;color:#2a2a2a;font-family:'Liberation Mono', monospace;right:1631.40px;text-align:right;transform:scaleX(0.9);transform-origin:100% 50%;">15</div>
<div class="t" style="top:1021.45px;font-size:22.5px;line-height:22.5px;color:#2a2a2a;font-family:'Liberation Mono', monospace;right:1487.20px;text-align:right;transform:scaleX(0.9);transform-origin:100% 50%;">1</div>
<div class="t" style="top:1021.45px;font-size:22.5px;line-height:22.5px;color:#2a2a2a;font-family:'Liberation Mono', monospace;right:1343.00px;text-align:right;transform:scaleX(0.9);transform-origin:100% 50%;">22</div>
<div class="t" style="top:1021.45px;font-size:22.5px;line-height:22.5px;color:#2a2a2a;font-family:'Liberation Mono', monospace;right:1198.80px;text-align:right;transform:scaleX(0.9);transform-origin:100% 50%;">1</div>
<div class="t" style="top:1021.45px;font-size:22.5px;line-height:22.5px;color:#2a2a2a;font-family:'Liberation Mono', monospace;right:1054.60px;text-align:right;transform:scaleX(0.9);transform-origin:100% 50%;">67</div>
<div class="t" style="top:1021.45px;font-size:22.5px;line-height:22.5px;color:#2a2a2a;font-family:'Liberation Mono', monospace;right:910.40px;text-align:right;transform:scaleX(0.9);transform-origin:100% 50%;">4</div>
<div class="t" style="top:1021.45px;font-size:22.5px;line-height:22.5px;color:#2a2a2a;font-family:'Liberation Mono', monospace;right:766.20px;text-align:right;transform:scaleX(0.9);transform-origin:100% 50%;">126</div>
<div class="t" style="top:1021.45px;font-size:22.5px;line-height:22.5px;color:#2a2a2a;font-family:'Liberation Mono', monospace;right:622.00px;text-align:right;transform:scaleX(0.9);transform-origin:100% 50%;">6</div>
<div class="t" style="top:1053.34px;font-size:21px;line-height:21px;color:#252525;left:101.00px;">East</div>
<div class="t" style="top:1053.87px;font-size:22.5px;line-height:22.5px;color:#2a2a2a;font-family:'Liberation Mono', monospace;right:1919.80px;text-align:right;transform:scaleX(0.9);transform-origin:100% 50%;">13</div>
<div class="t" style="top:1053.87px;font-size:22.5px;line-height:22.5px;color:#2a2a2a;font-family:'Liberation Mono', monospace;right:1775.60px;text-align:right;transform:scaleX(0.9);transform-origin:100% 50%;">1</div>
<div class="t" style="top:1053.87px;font-size:22.5px;line-height:22.5px;color:#2a2a2a;font-family:'Liberation Mono', monospace;right:1631.40px;text-align:right;transform:scaleX(0.9);transform-origin:100% 50%;">27</div>
<div class="t" style="top:1053.87px;font-size:22.5px;line-height:22.5px;color:#2a2a2a;font-family:'Liberation Mono', monospace;right:1487.20px;text-align:right;transform:scaleX(0.9);transform-origin:100% 50%;">2</div>
<div class="t" style="top:1053.87px;font-size:22.5px;line-height:22.5px;color:#2a2a2a;font-family:'Liberation Mono', monospace;right:1343.00px;text-align:right;transform:scaleX(0.9);transform-origin:100% 50%;">31</div>
<div class="t" style="top:1053.87px;font-size:22.5px;line-height:22.5px;color:#2a2a2a;font-family:'Liberation Mono', monospace;right:1198.80px;text-align:right;transform:scaleX(0.9);transform-origin:100% 50%;">2</div>
<div class="t" style="top:1053.87px;font-size:22.5px;line-height:22.5px;color:#2a2a2a;font-family:'Liberation Mono', monospace;right:1054.60px;text-align:right;transform:scaleX(0.9);transform-origin:100% 50%;">41</div>
<div class="t" style="top:1053.87px;font-size:22.5px;line-height:22.5px;color:#2a2a2a;font-family:'Liberation Mono', monospace;right:910.40px;text-align:right;transform:scaleX(0.9);transform-origin:100% 50%;">3</div>
<div class="t" style="top:1053.87px;font-size:22.5px;line-height:22.5px;color:#2a2a2a;font-family:'Liberation Mono', monospace;right:766.20px;text-align:right;transform:scaleX(0.9);transform-origin:100% 50%;">112</div>
<div class="t" style="top:1053.87px;font-size:22.5px;line-height:22.5px;color:#2a2a2a;font-family:'Liberation Mono', monospace;right:622.00px;text-align:right;transform:scaleX(0.9);transform-origin:100% 50%;">7</div>
<div class="t" style="top:1085.76px;font-size:21px;line-height:21px;color:#252525;left:101.00px;">Central</div>
<div class="t" style="top:1086.29px;font-size:22.5px;line-height:22.5px;color:#2a2a2a;font-family:'Liberation Mono', monospace;right:1919.80px;text-align:right;transform:scaleX(0.9);transform-origin:100% 50%;">12</div>
<div class="t" style="top:1086.29px;font-size:22.5px;line-height:22.5px;color:#2a2a2a;font-family:'Liberation Mono', monospace;right:1775.60px;text-align:right;transform:scaleX(0.9);transform-origin:100% 50%;">1</div>
<div class="t" style="top:1086.29px;font-size:22.5px;line-height:22.5px;color:#2a2a2a;font-family:'Liberation Mono', monospace;right:1631.40px;text-align:right;transform:scaleX(0.9);transform-origin:100% 50%;">42</div>
<div class="t" style="top:1086.29px;font-size:22.5px;line-height:22.5px;color:#2a2a2a;font-family:'Liberation Mono', monospace;right:1487.20px;text-align:right;transform:scaleX(0.9);transform-origin:100% 50%;">2</div>
<div class="t" style="top:1086.29px;font-size:22.5px;line-height:22.5px;color:#2a2a2a;font-family:'Liberation Mono', monospace;right:1343.00px;text-align:right;transform:scaleX(0.9);transform-origin:100% 50%;">24</div>
<div class="t" style="top:1086.29px;font-size:22.5px;line-height:22.5px;color:#2a2a2a;font-family:'Liberation Mono', monospace;right:1198.80px;text-align:right;transform:scaleX(0.9);transform-origin:100% 50%;">2</div>
<div class="t" style="top:1086.29px;font-size:22.5px;line-height:22.5px;color:#2a2a2a;font-family:'Liberation Mono', monospace;right:1054.60px;text-align:right;transform:scaleX(0.9);transform-origin:100% 50%;">36</div>
<div class="t" style="top:1086.29px;font-size:22.5px;line-height:22.5px;color:#2a2a2a;font-family:'Liberation Mono', monospace;right:910.40px;text-align:right;transform:scaleX(0.9);transform-origin:100% 50%;">1</div>
<div class="t" style="top:1086.29px;font-size:22.5px;line-height:22.5px;color:#2a2a2a;font-family:'Liberation Mono', monospace;right:766.20px;text-align:right;transform:scaleX(0.9);transform-origin:100% 50%;">114</div>
<div class="t" style="top:1086.29px;font-size:22.5px;line-height:22.5px;color:#2a2a2a;font-family:'Liberation Mono', monospace;right:622.00px;text-align:right;transform:scaleX(0.9);transform-origin:100% 50%;">5</div>
<div class="t" style="top:1118.18px;font-size:21px;line-height:21px;color:#252525;left:101.00px;">South</div>
<div class="t" style="top:1118.71px;font-size:22.5px;line-height:22.5px;color:#2a2a2a;font-family:'Liberation Mono', monospace;right:1919.80px;text-align:right;transform:scaleX(0.9);transform-origin:100% 50%;">18</div>
<div class="t" style="top:1118.71px;font-size:22.5px;line-height:22.5px;color:#2a2a2a;font-family:'Liberation Mono', monospace;right:1775.60px;text-align:right;transform:scaleX(0.9);transform-origin:100% 50%;">1</div>
<div class="t" style="top:1118.71px;font-size:22.5px;line-height:22.5px;color:#2a2a2a;font-family:'Liberation Mono', monospace;right:1631.40px;text-align:right;transform:scaleX(0.9);transform-origin:100% 50%;">13</div>
<div class="t" style="top:1118.71px;font-size:22.5px;line-height:22.5px;color:#2a2a2a;font-family:'Liberation Mono', monospace;right:1487.20px;text-align:right;transform:scaleX(0.9);transform-origin:100% 50%;">1</div>
<div class="t" style="top:1118.71px;font-size:22.5px;line-height:22.5px;color:#2a2a2a;font-family:'Liberation Mono', monospace;right:1343.00px;text-align:right;transform:scaleX(0.9);transform-origin:100% 50%;">17</div>
<div class="t" style="top:1118.71px;font-size:22.5px;line-height:22.5px;color:#2a2a2a;font-family:'Liberation Mono', monospace;right:1198.80px;text-align:right;transform:scaleX(0.9);transform-origin:100% 50%;">1</div>
<div class="t" style="top:1118.71px;font-size:22.5px;line-height:22.5px;color:#2a2a2a;font-family:'Liberation Mono', monospace;right:1054.60px;text-align:right;transform:scaleX(0.9);transform-origin:100% 50%;">3</div>
<div class="t" style="top:1118.71px;font-size:22.5px;line-height:22.5px;color:#2a2a2a;font-family:'Liberation Mono', monospace;right:910.40px;text-align:right;transform:scaleX(0.9);transform-origin:100% 50%;">0</div>
<div class="t" style="top:1118.71px;font-size:22.5px;line-height:22.5px;color:#2a2a2a;font-family:'Liberation Mono', monospace;right:766.20px;text-align:right;transform:scaleX(0.9);transform-origin:100% 50%;">51</div>
<div class="t" style="top:1118.71px;font-size:22.5px;line-height:22.5px;color:#2a2a2a;font-family:'Liberation Mono', monospace;right:622.00px;text-align:right;transform:scaleX(0.9);transform-origin:100% 50%;">3</div>
<div class="t" style="top:1168.68px;font-size:21px;line-height:21px;color:#1a1a1a;left:91.00px;-webkit-text-stroke:0.35px #1a1a1a;">Copiers</div>
<div class="t" style="top:1169.21px;font-size:22.5px;line-height:22.5px;color:#1a1a1a;font-family:'Liberation Mono', monospace;right:1631.40px;text-align:right;-webkit-text-stroke:0.3px #1a1a1a;transform:scaleX(0.9);transform-origin:100% 50%;">9</div>
<div class="t" style="top:1169.21px;font-size:22.5px;line-height:22.5px;color:#1a1a1a;font-family:'Liberation Mono', monospace;right:1487.20px;text-align:right;-webkit-text-stroke:0.3px #1a1a1a;transform:scaleX(0.9);transform-origin:100% 50%;">4</div>
<div class="t" style="top:1169.21px;font-size:22.5px;line-height:22.5px;color:#1a1a1a;font-family:'Liberation Mono', monospace;right:1343.00px;text-align:right;-webkit-text-stroke:0.3px #1a1a1a;transform:scaleX(0.9);transform-origin:100% 50%;">4</div>
<div class="t" style="top:1169.21px;font-size:22.5px;line-height:22.5px;color:#1a1a1a;font-family:'Liberation Mono', monospace;right:1198.80px;text-align:right;-webkit-text-stroke:0.3px #1a1a1a;transform:scaleX(0.9);transform-origin:100% 50%;">1</div>
<div class="t" style="top:1169.21px;font-size:22.5px;line-height:22.5px;color:#1a1a1a;font-family:'Liberation Mono', monospace;right:1054.60px;text-align:right;-webkit-text-stroke:0.3px #1a1a1a;transform:scaleX(0.9);transform-origin:100% 50%;">20</div>
<div class="t" style="top:1169.21px;font-size:22.5px;line-height:22.5px;color:#1a1a1a;font-family:'Liberation Mono', monospace;right:910.40px;text-align:right;-webkit-text-stroke:0.3px #1a1a1a;transform:scaleX(0.9);transform-origin:100% 50%;">21</div>
<div class="t" style="top:1169.21px;font-size:22.5px;line-height:22.5px;color:#1a1a1a;font-family:'Liberation Mono', monospace;right:766.20px;text-align:right;-webkit-text-stroke:0.3px #1a1a1a;transform:scaleX(0.9);transform-origin:100% 50%;">33</div>
<div class="t" style="top:1169.21px;font-size:22.5px;line-height:22.5px;color:#1a1a1a;font-family:'Liberation Mono', monospace;right:622.00px;text-align:right;-webkit-text-stroke:0.3px #1a1a1a;transform:scaleX(0.9);transform-origin:100% 50%;">27</div>
<div class="t" style="top:628.67px;font-size:22.5px;line-height:22.5px;color:#2a2a2a;font-family:'Liberation Mono', monospace;left:1759.50px;transform:scaleX(0.9);transform-origin:0 50%;">41.7%</div>
<svg class="r" style="left:11px;top:631px;" width="20" height="18" viewBox="0 0 20 18" fill="none"><path d="M2 3 H18 M2 7.3 H18 M2 11.6 H18 M2 15.9 H18" stroke="#666" stroke-width="1.3"/></svg>
<div class="r" style="left:605.5px;top:524.5px;width:78.5px;height:53.0px;box-sizing:border-box;border:2.6px solid #d9141e;border-radius:6px;box-shadow:inset 0 0 5px rgba(0,0,0,0.25);"></div>
<div class="r" style="left:613px;top:651px;width:74px;height:36.5px;box-sizing:border-box;border:2.6px solid #d9141e;border-radius:6px;box-shadow:inset 0 0 5px rgba(0,0,0,0.25);"></div>
<div class="r" style="left:34.00px;top:1225.00px;width:1732.00px;height:14.50px;background:#fff;box-sizing:border-box;border:1px solid #ececec;border-radius:7px;"></div>
<div class="r" style="left:34.00px;top:1225.00px;width:1189.00px;height:14.50px;background:#a9a9a9;border-radius:7px;"></div>
<div class="r" style="left:9.00px;top:1239.50px;width:1757.00px;height:47.50px;background:#f4f4f4;"></div>
<div class="t" style="top:1253.22px;font-size:21px;line-height:21px;color:#333;left:8.00px;">Total rows:</div>
<div class="t" style="top:1254.90px;font-size:21px;line-height:21px;color:#333;font-family:'Liberation Mono', monospace;left:116.00px;">90</div>
<div class="t" style="top:1253.22px;font-size:21px;line-height:21px;color:#333;left:162.50px;">Sum:</div>
<div class="t" style="top:1254.90px;font-size:21px;line-height:21px;color:#333;font-family:'Liberation Mono', monospace;left:218.00px;">6</div>
<div class="t" style="top:1253.22px;font-size:21px;line-height:21px;color:#333;left:252.00px;">Avg:</div>
<div class="t" style="top:1254.90px;font-size:21px;line-height:21px;color:#333;font-family:'Liberation Mono', monospace;left:299.50px;">0</div>
<div class="t" style="top:1253.22px;font-size:21px;line-height:21px;color:#333;left:334.00px;">Count:</div>
<div class="t" style="top:1254.90px;font-size:21px;line-height:21px;color:#333;font-family:'Liberation Mono', monospace;left:406.00px;">16</div>
<svg class="r" style="left:448px;top:1250px;" width="28" height="26" viewBox="0 0 28 26" fill="none"><path d="M4.2 13.8 A11 11 0 0 1 25.4 13.8" stroke="#333" stroke-width="1.9"/><circle cx="15.5" cy="14.2" r="3.3" stroke="#333" stroke-width="1.8"/><path d="M5.2 4.6 L22.6 21.5" stroke="#333" stroke-width="1.9"/></svg>
<svg class="r" style="left:1002px;top:1248px;" width="32" height="32" viewBox="0 0 32 32" fill="none"><g transform="translate(16 16) rotate(22.5)"><path d="M9.70 -2.42 L12.96 -2.52 L12.96 2.52 L9.70 2.42 L8.57 5.15 L10.94 7.38 L7.38 10.94 L5.15 8.57 L2.42 9.70 L2.52 12.96 L-2.52 12.96 L-2.42 9.70 L-5.15 8.57 L-7.38 10.94 L-10.94 7.38 L-8.57 5.15 L-9.70 2.42 L-12.96 2.52 L-12.96 -2.52 L-9.70 -2.42 L-8.57 -5.15 L-10.94 -7.38 L-7.38 -10.94 L-5.15 -8.57 L-2.42 -9.70 L-2.52 -12.96 L2.52 -12.96 L2.42 -9.70 L5.15 -8.57 L7.38 -10.94 L10.94 -7.38 L8.57 -5.15 Z" stroke="#444" stroke-width="1.9" stroke-linejoin="round" fill="#f3f3f3"/><circle r="5.2" stroke="#1f5aa6" stroke-width="2.2"/></g></svg>
<div class="r" style="left:1053.00px;top:1265.20px;width:18.00px;height:2.00px;background:#444;"></div>
<div class="r" style="left:1088.00px;top:1251.00px;width:96.00px;height:35.00px;background:#fff;box-sizing:border-box;border:1px solid #d6d6d6;"></div>
<div class="t" style="top:1259.90px;font-size:21px;line-height:21px;color:#252525;font-family:'Liberation Mono', monospace;left:1108.00px;">100</div>
<div class="t" style="top:1258.22px;font-size:21px;line-height:21px;color:#252525;left:1148.00px;">%</div>
<svg class="r" style="left:1195px;top:1256px;" width="22" height="22" viewBox="0 0 22 22" fill="none"><path d="M11 1 V21 M1 11 H21" stroke="#333" stroke-width="2"/></svg>
<svg class="r" style="left:1266px;top:1252px;" width="52" height="24" viewBox="0 0 52 24" fill="none"><path d="M3.5 3 V20" stroke="#222" stroke-width="2.6"/><path d="M19.5 3.5 L10 11.8 L19.5 20" stroke="#222" stroke-width="2.7"/><path d="M43 3.5 L32.5 11.8 L43 20" stroke="#222" stroke-width="2.7"/></svg>
<div class="t" style="top:1253.22px;font-size:21px;line-height:21px;color:#333;left:1319.00px;">Page</div>
<div class="r" style="left:1371.70px;top:1245.30px;width:44.10px;height:35.40px;background:#f5f5f5;box-sizing:border-box;border:1.2px solid #d9d9d9;"></div>
<div class="t" style="top:1254.90px;font-size:21px;line-height:21px;color:#333;font-family:'Liberation Mono', monospace;left:1094.00px;width:600px;text-align:center;">1</div>
<div class="t" style="top:1253.22px;font-size:21px;line-height:21px;color:#333;left:1423.00px;">of 5</div>
<svg class="r" style="left:1464px;top:1252px;" width="52" height="24" viewBox="0 0 52 24" fill="none"><path d="M6 3.5 L15.5 11.8 L6 20" stroke="#222" stroke-width="2.7"/><path d="M29.5 3.5 L39.5 11.8 L29.5 20" stroke="#222" stroke-width="2.7"/><path d="M44.5 3 V20" stroke="#222" stroke-width="2.6"/></svg>
<div class="t" style="top:1254.90px;font-size:21px;line-height:21px;color:#333;font-family:'Liberation Mono', monospace;left:1596.00px;">1</div>
<div class="t" style="top:1253.22px;font-size:21px;line-height:21px;color:#333;left:1617.00px;">to</div>
<div class="t" style="top:1254.90px;font-size:21px;line-height:21px;color:#333;font-family:'Liberation Mono', monospace;left:1645.50px;">19</div>
<div class="t" style="top:1253.22px;font-size:21px;line-height:21px;color:#333;left:1678.50px;">of</div>
<div class="t" style="top:1254.90px;font-size:21px;line-height:21px;color:#333;font-family:'Liberation Mono', monospace;left:1707.00px;">90</div>
<div class="r" style="left:1766.00px;top:8.00px;width:531.00px;height:1279.00px;background:#ffffff;box-shadow:-2px 0 4px rgba(0,0,0,0.12);"></div>
<div class="r" style="left:1766.00px;top:109.00px;width:531.00px;height:1063.00px;background:#f4f4f4;"></div>
<svg class="r" style="left:1794px;top:52px;" width="24" height="32" viewBox="0 0 24 32" fill="none"><path d="M17 4.5 L5.5 16 L17 27.5" stroke="#333" stroke-width="1.8"/></svg>
<div class="t" style="top:49.37px;font-size:35px;line-height:35px;color:#252525;left:1849.00px;">Calculated Row</div>
<svg class="r" style="left:2252px;top:57px;" width="32" height="32" viewBox="0 0 32 32" fill="none"><path d="M5 5 L27 27 M27 5 L5 27" stroke="#333" stroke-width="2.2"/></svg>
<div class="t" style="top:144.22px;font-size:21px;line-height:21px;color:#252525;left:1795.00px;-webkit-text-stroke:0.45px #252525;letter-spacing:1px;">Title</div>
<div class="t" style="top:144.22px;font-size:21px;line-height:21px;color:#b00020;font-weight:700;left:1845.00px;">*</div>
<div class="r" style="left:1795.50px;top:173.80px;width:471.50px;height:56.80px;background:#fff;box-sizing:border-box;border:1.5px solid #dadada;"></div>
<div class="t" style="top:192.22px;font-size:21px;line-height:21px;color:#333;left:1818.00px;">% Contr. East</div>
<div class="t" style="top:265.92px;font-size:21px;line-height:21px;color:#252525;left:1795.00px;-webkit-text-stroke:0.45px #252525;">Formula</div>
<div class="t" style="top:265.92px;font-size:21px;line-height:21px;color:#b00020;font-weight:700;left:1881.00px;">*</div>
<div class="r" style="left:1795.50px;top:304.00px;width:471.50px;height:217.50px;background:#fff;box-sizing:border-box;border:1.5px solid #dadada;"></div>
<div class="t" style="left:1804px;top:320.22px;font-size:21px;line-height:21px;color:#333;">(<span style="color:#1a7ad0">[Technology]</span> . <span style="color:#1a7ad0">[Phones]</span> .</div>
<div class="t" style="left:1804px;top:355.22px;font-size:21px;line-height:21px;color:#333;letter-spacing:-0.3px"><span style="color:#1a7ad0">[East]</span>/<span style="color:#1a7ad0">ROW.PARENT.PARENT</span>)</div>
<svg class="r" style="left:1796px;top:540px;" width="20" height="26" viewBox="0 0 20 26" fill="none"><path d="M6 18 Q6 14 3.5 11 Q1.5 8 2.2 5.6 Q3.5 1.5 9.8 1.5 Q16 1.5 17.5 5.6 Q18 8 16 11 Q13.5 14 13.5 18 Z" stroke="#555" stroke-width="1.6"/><path d="M6.3 21.5 H13.3" stroke="#555" stroke-width="1.8"/></svg>
<div class="t" style="top:542.74px;font-size:19.8px;line-height:19.8px;color:#5e5e5e;left:1823.50px;">Select any row in the table to add to the formula.</div>
<div class="t" style="left:1823.5px;top:571.74px;font-size:19.8px;line-height:20px;color:#5e5e5e;">Use <span style="color:#555;-webkit-text-stroke:0.5px #555;letter-spacing:-0.2px">Ctrl + Space</span> to open suggestion</div>
<div class="r" style="left:1795.50px;top:643.60px;width:28.50px;height:28.40px;background:#fff;box-sizing:border-box;border:1.7px solid #444;"></div>
<div class="t" style="top:649.22px;font-size:21px;line-height:21px;color:#333;left:1838.00px;">Include in total</div>
<div class="r" style="left:1795.50px;top:738.00px;width:28.50px;height:28.40px;background:#fff;box-sizing:border-box;border:1.7px solid #444;"></div>
<div class="t" style="top:743.62px;font-size:21px;line-height:21px;color:#333;left:1838.00px;">Include in Charts</div>
<div class="r" style="left:1795.50px;top:832.60px;width:28.50px;height:28.40px;background:#fff;box-sizing:border-box;border:1.7px solid #444;"></div>
<div class="t" style="top:838.22px;font-size:21px;line-height:21px;color:#333;left:1838.00px;">Evaluate Columns Before Rows</div>
<div class="t" style="top:914.52px;font-size:21px;line-height:21px;color:#252525;left:1795.00px;-webkit-text-stroke:0.45px #252525;letter-spacing:0.5px;">Description</div>
<div class="r" style="left:1795.50px;top:952.00px;width:471.50px;height:89.50px;background:#fff;box-sizing:border-box;border:1.5px solid #dadada;"></div>
<div class="t" style="top:964.45px;font-size:22.5px;line-height:22.5px;color:#a4a4a4;left:1806.00px;letter-spacing:0.45px;">Formula description</div>
<svg class="r" style="left:2248px;top:1022px;" width="16" height="16" viewBox="0 0 16 16" fill="none"><path d="M3 14 L14 3 M9 14 L14 9" stroke="#444" stroke-width="1.3"/></svg>
<div class="r" style="left:1964.70px;top:1197.80px;width:143.90px;height:63.80px;background:#f1f1f1;"></div>
<div class="t" style="top:1221.22px;font-size:21px;line-height:21px;color:#252525;left:1736.60px;width:600px;text-align:center;letter-spacing:0.8px;">Close</div>
<div class="r" style="left:2127.00px;top:1197.80px;width:143.70px;height:63.80px;background:#0a74d2;"></div>
<div class="t" style="top:1221.22px;font-size:21px;line-height:21px;color:#ffffff;font-weight:700;left:1898.90px;width:600px;text-align:center;letter-spacing:0.6px;">Update</div>
</body></html>
